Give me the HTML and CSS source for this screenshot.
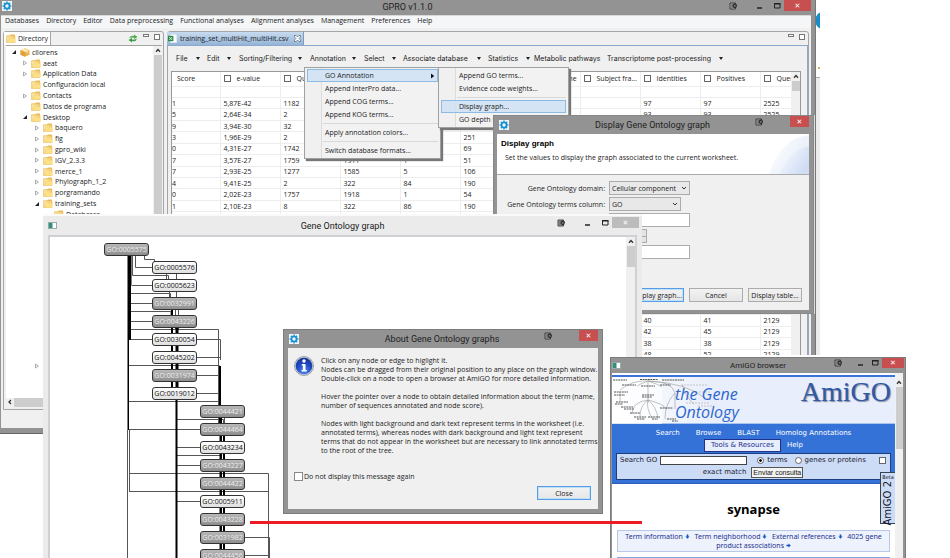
FILE: index.html
```html
<!DOCTYPE html>
<html lang="en">
<head>
<meta charset="utf-8">
<title>GPRO v1.1.0</title>
<link rel="stylesheet" href="styles.css">
</head>
<body>
<svg width="0" height="0" class="defs" aria-hidden="true">
  <defs>
    <linearGradient id="fold" x1="0" y1="0" x2="1" y2="1"><stop offset="0" stop-color="#fdeeb0"/><stop offset="1" stop-color="#f0b848"/></linearGradient>
    <radialGradient id="infog" cx=".5" cy=".8" r=".8"><stop offset="0" stop-color="#4f86ee"/><stop offset=".6" stop-color="#1c45c0"/><stop offset="1" stop-color="#1a3590"/></radialGradient>
    <symbol id="gear" viewBox="0 0 10 10"><rect width="10" height="10" fill="#f2f6f8"/><circle cx="5" cy="5" r="2.6" fill="none" stroke="#1591d0" stroke-width="1.8"/><g stroke="#1591d0" stroke-width="1.5"><path d="M5 .6v1.2M5 8.200v1.2M.6 5h1.2M8.200 5h1.200M1.900 1.900l.8.8M7.300 7.300l.8.8M1.900 8.100l.8-.8M7.300 2.700l.8-.8"/></g></symbol>
    <symbol id="folder" viewBox="0 0 10 9"><path d="M.5 1.500h3.500l1-1h4v2H.5z" fill="#eebf5c"/><path d="M.5 2h8.500v6.500H.5z" fill="url(#fold)" stroke="#e2b050" stroke-width=".5"/><path d="M3 4.500h6.500V8.500H2z" fill="#fbe08a"/></symbol>
    <symbol id="box" viewBox="0 0 11 10"><path d="M5.500.3L10.500 2.500v5L5.500 9.800.5 7.500v-5z" fill="#eab14e"/><path d="M5.500.3l5 2.200-5 2.300-5-2.300z" fill="#f8dc9a"/><path d="M5.500 4.800v5L.5 7.500v-5z" fill="#e3a03a"/><path d="M3 1.400l5 2.300v2" stroke="#fff3cf" fill="none"/></symbol>
    <symbol id="win" viewBox="0 0 9 7"><rect x=".5" y=".5" width="8" height="6" fill="#fff" stroke="#9aa"/><rect x="1" y="1" width="3.500" height="5" fill="#2f8f7b"/></symbol>
    <symbol id="pin" viewBox="0 0 8 8"><path d="M1 1h5.500v6H1z" fill="#aaa" stroke="#333" stroke-width=".9"/><path d="M2 3h3M2 5h2" stroke="#333" stroke-width=".7"/><circle cx="5.700" cy="3.800" r="2.200" fill="#222"/><path d="M4.600 3l2.200 1.600M6.500 2.600l-1.500 2.200" stroke="#ccc" stroke-width=".5"/></symbol>
    <symbol id="min" viewBox="0 0 8 8"><path d="M1 6h5" stroke="#222" stroke-width="1.500"/></symbol>
    <symbol id="max" viewBox="0 0 8 8"><path d="M1.500 1.500h5.500v4.500H1.500z" fill="none" stroke="#222"/><path d="M1 1.800h6.500" stroke="#222" stroke-width="1.400"/></symbol>
    <symbol id="up" viewBox="0 0 8 8"><path d="M2 5.200L4 3l2 2.200" fill="none" stroke="#333" stroke-width="1.300"/></symbol>
    <symbol id="tri" viewBox="0 0 6 6"><path d="M1.500 1L4.500 3 1.500 5z" fill="#fff" stroke="#999" stroke-width=".8"/></symbol>
    <symbol id="trio" viewBox="0 0 6 6"><path d="M5 1v4H1z" fill="#222"/></symbol>
    <symbol id="arr" viewBox="0 0 6 6"><path d="M2 .5h2V3h1.500L3 5.800.5 3H2z" fill="#1450c8"/></symbol>
  </defs>
</svg>

<div class="desktop">
  <div class="behind"><svg viewBox="0 0 5 355" width="5" height="355" aria-hidden="true"><path d="M0 0h5v77H0z" fill="#fff"/><path d="M0 77h5v278H0z" fill="#ececec"/><path d="M0 77.500h5" stroke="#aaa"/><circle cx="9" cy="20.500" r="9" fill="#1a8cc8"/><path d="M3 67h2v2H3z" fill="#d9b35c"/></svg></div>

  <section class="window main">
    <header class="bar">
      <svg class="ico"><use href="#gear"/></svg><h1>GPRO v1.1.0</h1>
      <div class="ctl"><svg class="pin"><use href="#pin"/></svg><svg class="mi"><use href="#min"/></svg><svg><use href="#max"/></svg><button class="x" aria-label="Close">✕</button></div>
    </header>
    <div class="client">
      <nav class="menubar"><button>Databases</button><button>Directory</button><button>Editor</button><button>Data preprocessing</button><button>Functional analyses</button><button>Alignment analyses</button><button>Management</button><button>Preferences</button><button>Help</button></nav>
      <div class="work">
        <aside class="panel dir">
          <div class="tabs"><div class="tab"><svg class="fold"><use href="#folder"/></svg>Directory</div>
            <div class="tools"><svg viewBox="0 0 10 9" width="10" height="9"><path d="M1 4.500Q2 1 6 2V.5L9.500 3 6 5V3.800Q3 3 1 4.500z" fill="#4fae4b"/><path d="M9 4.500Q8 8 4 7v1.500L.5 6 4 4v1.500Q7 6 9 4.500z" fill="#3d9a45"/></svg><i class="mn"></i><i class="mx"></i></div></div>
          <div class="dirbody">
            <ul class="tree">
              <li class="l0"><svg class="tw"><use href="#trio"/></svg><svg class="fold"><use href="#box"/></svg>cllorens</li>
              <li class="l1"><svg class="tw"><use href="#tri"/></svg><svg class="fold"><use href="#folder"/></svg>aeat</li>
              <li class="l1"><svg class="tw"><use href="#tri"/></svg><svg class="fold"><use href="#folder"/></svg>Application Data</li>
              <li class="l1"><svg class="tw"></svg><svg class="fold"><use href="#folder"/></svg>Configuración local</li>
              <li class="l1"><svg class="tw"><use href="#tri"/></svg><svg class="fold"><use href="#folder"/></svg>Contacts</li>
              <li class="l1"><svg class="tw"></svg><svg class="fold"><use href="#folder"/></svg>Datos de programa</li>
              <li class="l1"><svg class="tw"><use href="#trio"/></svg><svg class="fold"><use href="#folder"/></svg>Desktop</li>
              <li class="l2"><svg class="tw"><use href="#tri"/></svg><svg class="fold"><use href="#folder"/></svg>baquero</li>
              <li class="l2"><svg class="tw"><use href="#tri"/></svg><svg class="fold"><use href="#folder"/></svg>fig</li>
              <li class="l2"><svg class="tw"><use href="#tri"/></svg><svg class="fold"><use href="#folder"/></svg>gpro_wiki</li>
              <li class="l2"><svg class="tw"><use href="#tri"/></svg><svg class="fold"><use href="#folder"/></svg>IGV_2.3.3</li>
              <li class="l2"><svg class="tw"><use href="#tri"/></svg><svg class="fold"><use href="#folder"/></svg>merce_1</li>
              <li class="l2"><svg class="tw"><use href="#tri"/></svg><svg class="fold"><use href="#folder"/></svg>Phylograph_1_2</li>
              <li class="l2"><svg class="tw"><use href="#tri"/></svg><svg class="fold"><use href="#folder"/></svg>porgramando</li>
              <li class="l2"><svg class="tw"><use href="#trio"/></svg><svg class="fold"><use href="#folder"/></svg>training_sets</li>
              <li class="l3"><svg class="fold"><use href="#folder"/></svg>Databases</li>
              <li class="l2 last"><svg class="tw"><use href="#tri"/></svg><svg class="fold"><use href="#folder"/></svg></li>
            </ul>
            <div class="vscroll"><svg><use href="#up"/></svg><span class="thumb long"></span></div>
          </div>
          <div class="hscroll"><svg viewBox="0 0 8 8"><path d="M5 2L3 4l2 2" fill="none" stroke="#333" stroke-width="1.300"/></svg><span class="thumb"></span></div>
        </aside>
        <main class="panel sheet">
          <div class="tabs"><div class="tab on"><svg viewBox="0 0 10 10" width="9" height="9"><path d="M2 0h8v10H2z" fill="#fff" stroke="#9ab" stroke-width=".6"/><path d="M0 2h6v6H0z" fill="#2c8a43"/><path d="M1.500 3.500l3 3M4.500 3.500l-3 3" stroke="#fff"/></svg>training_set_multiHit_multiHit.csv<svg class="tx" viewBox="0 0 7 7"><path d="M.5.5h1.500l1.500 1.500L5 .5h1.500V2L5 3.500 6.500 5v1.500H5L3.500 5 2 6.500H.5V5L2 3.500.5 2z" fill="#fff" stroke="#567" stroke-width=".7"/></svg></div><div class="tools"><i class="mn"></i><i class="mx"></i></div></div>
          <div class="sheetbody">
            <div class="toolbar"><button class="t1">File<b></b></button><button class="t2">Edit<b></b></button><button class="t3">Sorting/Filtering<b></b></button><button class="t4">Annotation<b></b></button><button class="t5">Select<b></b></button><button class="t6">Associate database<b></b></button><button class="t7">Statistics<b></b></button><button class="t8">Metabolic pathways</button><button class="t9">Transcriptome post-processing<b></b></button></div>
            <div class="grid">
              <table>
                <colgroup><col class="c0"><col><col><col><col><col><col><col><col><col><col class="c10"></colgroup>
                <thead><tr><th class="sc">Score</th><th><input type="checkbox" aria-label="e-value">e-value</th><th><input type="checkbox" aria-label="Query start">Qu</th><th></th><th></th><th></th><th class="me">ne</th><th><input type="checkbox" aria-label="Subject frame">Subject fra...</th><th><input type="checkbox" aria-label="Identities">Identities</th><th><input type="checkbox" aria-label="Positives">Positives</th><th><input type="checkbox" aria-label="Query length">Quer</th></tr></thead>
                <tbody id="rows"></tbody>
              </table>
              <div class="vscroll"><svg><use href="#up"/></svg><span class="thumb short"></span></div>
            </div>
          </div>
        </main>
      </div>
    </div>
  </section>

  <div class="menu menu1" role="menu">
    <button class="hot">GO Annotation<svg viewBox="0 0 5 6" width="4" height="6"><path d="M0 0l4 3-4 3z" fill="#111"/></svg></button><button>Append InterPro data...</button><button>Append COG terms...</button><button>Append KOG terms...</button><hr><button>Apply annotation colors...</button><hr><button>Switch database formats...</button>
  </div>
  <div class="menu menu2" role="menu">
    <button>Append GO terms...</button><button>Evidence code weights...</button><hr><button class="hot">Display graph...</button><button>GO depth s</button>
  </div>

  <section class="window display">
    <header class="bar"><svg class="ico"><use href="#gear"/></svg><h2>Display Gene Ontology graph</h2><div class="ctl"><svg class="pin"><use href="#pin"/></svg><button class="x" aria-label="Close">✕</button></div></header>
    <div class="client">
      <div class="banner"><div><h3>Display graph</h3><p>Set the values to display the graph associated to the current worksheet.</p></div>
        <svg viewBox="0 0 42 40" width="42" height="40" aria-hidden="true"><defs><linearGradient id="sw" x1="0" y1="0" x2="1" y2=".6"><stop offset="0" stop-color="#fff"/><stop offset="1" stop-color="#cfdcf4"/></linearGradient></defs><path d="M2 40Q14 4 42 1v39z" fill="url(#sw)" opacity=".5"/><path d="M12 40Q22 16 42 12v28z" fill="url(#sw)"/></svg></div>
      <form class="form">
        <label for="dom">Gene Ontology domain:</label><select id="dom"><option>Cellular component</option></select>
        <label for="col">Gene Ontology terms column:</label><select id="col" class="narrow"><option>GO</option></select>
        <label for="f1"></label><input id="f1" type="text" aria-label="Sequences column">
        <label for="f2"></label><input id="f2" class="spin" type="text" aria-label="Minimum level">
        <label for="f3"></label><input id="f3" type="text" aria-label="Minimum score">
      </form>
      <div class="btns"><button class="focus">Display graph...</button><button>Cancel</button><button>Display table...</button></div>
    </div>
  </section>

  <div class="patch"></div>

  <section class="window graph">
    <header class="bar"><svg class="ico small"><use href="#win"/></svg><h2>Gene Ontology graph</h2><div class="ctl"><svg class="pin"><use href="#pin"/></svg><svg class="mi"><use href="#min"/></svg><svg><use href="#max"/></svg><button class="x" aria-label="Close">✕</button></div></header>
    <div class="client">
      <div class="canvas">
        <svg class="edges" viewBox="50 237 576 330" width="576" height="330" aria-hidden="true">
          <g fill="none" stroke="#555" stroke-width="1">
            <path d="M132.500 250V275.500H168.500V280M135.500 250V267.500H153M144.500 250V259.500H154.500V264"/>
            <path d="M131.500 285.500H153M131 293.500H170.500V300M130.500 303.500H153M130.500 311.500H171V318M130.500 321.500H153M130.500 329.500H218.500V405M129.500 339.500H153M129 365.500H219.500M129 401.500H219.500M128 429.500H201M129.500 430V491.500M129 473.500H268.500V560M129 491.500H268.500M127.500 430V560"/>
            <path d="M196 339.500H220.500V360M196 357.500H220M196 375.500H219M196 393.500H219M176.500 419.500H223.500V425M176 447.500H201M176 455.500H222M176 465.500H201M176 501.500H201M244 537.500H269.500V560M244 555.500H268"/>
            <path d="M166.500 273V279M176.500 273V300M169.500 290V297M175.500 300V330M178.500 300V330M218.500 417V425M224.500 417V425"/>
          </g>
          <g fill="#000"><path d="M127.500 250h4v35h-.5v55h-2V430h-1.500z"/><path d="M219 366h2v60h-2zM171 306h2v84h-2zM175.500 325h3v75h-3zM175.500 400h2v160h-2z"/><path d="M219.500 417h2.500v143h-2.500zM223 432h2v128h-2z"/></g>
        </svg>
        <div class="nodes">
          <button class="n dark root">GO:0005575</button>
          <button class="n b">GO:0005576</button><button class="n b">GO:0005623</button><button class="n b dark">GO:0032991</button><button class="n b dark">GO:0043226</button><button class="n b">GO:0030054</button><button class="n b">GO:0045202</button><button class="n b dark">GO:0031974</button><button class="n b">GO:0019012</button>
          <button class="n c dark">GO:0044421</button><button class="n c dark">GO:0044464</button><button class="n c">GO:0043234</button><button class="n c dark">GO:0043227</button><button class="n c dark">GO:0044422</button><button class="n c">GO:0005911</button><button class="n c dark">GO:0043228</button><button class="n c dark">GO:0031982</button><button class="n c dark">GO:0044456</button>
        </div>
      </div>
      <div class="vscroll"><svg><use href="#up"/></svg><span class="thumb mid"></span></div>
    </div>
  </section>

  <section class="window about">
    <header class="bar"><svg class="ico"><use href="#gear"/></svg><h2>About Gene Ontology graphs</h2><div class="ctl"><svg class="pin"><use href="#pin"/></svg><button class="x" aria-label="Close">✕</button></div></header>
    <div class="client">
      <div class="msg">
        <svg viewBox="0 0 20 20" width="20" height="20" aria-hidden="true"><circle cx="10" cy="10" r="9.500" fill="#c9cdd6" stroke="#8b909c" stroke-width=".8"/><circle cx="10" cy="10" r="8.300" fill="url(#infog)"/><circle cx="10" cy="5" r="1.700" fill="#fff"/><path d="M7.800 8h3.700v6h1.300v1.500H7.500V14h1.300V9.500h-1z" fill="#fff"/></svg>
        <div class="copy">
          <p>Click on any node or edge to higlight it.<br>Nodes can be dragged from their original position to any place on the graph window.<br>Double-click on a node to open a browser at AmiGO for more detailed information.</p>
          <p>Hover the pointer over a node to obtain detailed information about the term (name,<br>number of sequences annotated and node score).</p>
          <p>Nodes with light background and dark text represent terms in the worksheet (i.e.<br>annotated terms), whereas nodes with dark background and light text represent<br>terms that do not appear in the worksheet but are necessary to link annotated terms<br>to the root of the tree.</p>
        </div>
      </div>
      <label class="again"><input type="checkbox">Do not display this message again</label>
      <div class="btns"><button class="focus">Close</button></div>
    </div>
  </section>

  <section class="window amigo">
    <header class="bar"><svg class="ico small"><use href="#win"/></svg><h2>AmiGO browser</h2><div class="ctl"><svg class="pin"><use href="#pin"/></svg><svg class="mi"><use href="#min"/></svg><svg><use href="#max"/></svg><button class="x" aria-label="Close">✕</button></div></header>
    <div class="client">
      <div class="page">
        <div class="brand">
          <svg viewBox="0 0 110 46" width="110" height="46" aria-hidden="true"><rect width="50" height="46" fill="#fff" opacity=".6"/><g fill="none" stroke="#999" stroke-width=".6"><path d="M36 3Q20 2 8 12M36 3Q28 6 25 8M36 3v22M36 3q10 3 14 6M36 3q24 0 27 12v16M36 3q40 2 58 18M36 22Q20 24 20 36M36 22q-8 6-8 16M36 22q-2 8 4 18M36 22q8 6 10 18M36 22q16 4 18 9M8 14v10M63 15q-10 10-10 26M70 6q4 14 12 20"/></g><g stroke="#555" stroke-width="1.200" stroke-dasharray="2 .6"><path d="M1 2h14M28 1.500h18M50 2h22M10 7h14M29 8h14M48 7h11M2 14h14M2 17h11M30 17h12M30 19h10M4 24h12M3 26h8M9 29h12M12 31h10M18 35h10M22 39h12M25 41h8M36 39h12M40 41h6M48 30h13M55 41h9M60 43h6"/></g><g stroke="#bbb" stroke-width=".8" stroke-dasharray="2 1"><path d="M72 7h24M84 14h14M74 25h24M86 28h16"/></g></svg>
          <span class="go">the Gene<br>Ontology</span><span class="logo">AmiGO</span>
        </div>
        <nav class="nav"><div><a href="#search">Search</a><a href="#browse">Browse</a><a href="#blast">BLAST</a><a href="#homolog">Homolog Annotations</a></div><div><a class="sel" href="#tools">Tools &amp; Resources</a><a href="#help">Help</a></div>
          <form class="find"><div><label for="q">Search GO</label><input id="q" type="text"><label class="r"><input type="radio" name="k" checked>terms</label><label class="r2"><input type="radio" name="k">genes or proteins</label><input type="checkbox" id="ex"></div><div><label for="ex">exact match</label><button type="button">Enviar consulta</button></div></form>
        </nav>
        <h2 class="term">synapse</h2>
        <p class="links"><a href="#info">Term information <svg><use href="#arr"/></svg></a> <a href="#near">Term neighborhood <svg><use href="#arr"/></svg></a> <a href="#ext">External references <svg><use href="#arr"/></svg></a> <a href="#assoc">4025 gene<br>product associations <svg class="east"><use href="#arr"/></svg></a></p>
        <div class="next"></div>
        <a class="beta" href="#amigo2"><small>Beta</small><span>AmiGO 2</span></a>
      </div>
      <div class="vscroll"><svg><use href="#up"/></svg><span class="thumb tall"></span></div>
    </div>
  </section>

  <div class="link"></div>
</div>
<script src="rows.js"></script>
</body>
</html>
```
FILE: rows.js
```js
// Columns: score, e-value, query start, three middle columns, two blank, identities, positives, query length.
const data = [
  ["", "", "", "", "", "", "", "", "", "", ""],
  ["1", "5,87E-42", "1182", "", "", "", "", "", "97", "97", "2525"],
  ["5", "2,64E-34", "2", "", "", "", "", "", "93", "93", "2525"],
  ["9", "3,94E-30", "32", "", "", "", "", "", "", "", ""],
  ["3", "1,96E-29", "2", "", "", "251", "", "", "", "", ""],
  ["0", "4,31E-27", "1742", "", "", "69", "", "", "", "", ""],
  ["7", "3,57E-27", "1759", "1911", "1", "51", "", "", "", "", ""],
  ["7", "2,93E-25", "1277", "1585", "5", "106", "", "", "", "", ""],
  ["4", "9,41E-25", "2", "322", "84", "190", "", "", "", "", ""],
  ["0", "2,02E-23", "1757", "1918", "1", "54", "", "", "", "", ""],
  ["1", "2,10E-23", "8", "322", "86", "190", "", "", "", "", ""]
];
while (data.length < 20) data.push(Array(11).fill(""));
[["40", "41"], ["42", "45"], ["38", "38"], ["48", "52"]].forEach(([a, b]) =>
  data.push(["", "", "", "", "", "", "", "", a, b, "2129"]));
document.getElementById("rows").innerHTML = data.map(r =>
  "<tr>" + r.map(c => `<td>${c || "&nbsp;"}</td>`).join("") + "</tr>").join("");
```
FILE: styles.css
```css
* { box-sizing: border-box; }
body { margin: 0; background: #fff; color: #222; font: 7px/9px "Open Sans", "Noto Sans", sans-serif; }
h1, h2, h3, p, ul { margin: 0; padding: 0; }
button, input, select { font: inherit; color: inherit; margin: 0; padding: 0; }
button { border: 0; background: none; white-space: nowrap; }
svg { flex: none; display: block; }
a { color: inherit; text-decoration: none; }
input[type="checkbox"] { appearance: none; width: 7px; height: 7px; border: 1px solid #666; background: #fff; flex: none; }
.defs { position: absolute; }
.desktop { position: relative; height: 100vh; overflow: hidden; }

/* windows */
.window { position: absolute; display: flex; flex-direction: column; background: #939393; }
.bar { position: relative; display: flex; align-items: center; justify-content: center; flex: none; }
.bar h1, .bar h2 { font: 9px/12px Roboto, "Open Sans", sans-serif; color: #222; }
.bar .ico { position: absolute; left: 5px; width: 10px; height: 10px; }
.bar .ico.small { width: 9px; height: 7px; }
.ctl { position: absolute; top: 0; right: 4px; display: flex; align-items: center; }
.ctl svg { width: 8px; height: 8px; margin-right: 3px; }
.ctl .pin { margin-right: 19px; }
.ctl .mi { margin-right: 9px; }
.x { width: 27px; height: 11px; background: #c84f50; color: #fff; font: 7px/10px "DejaVu Sans", sans-serif; }
.client { flex: 1; display: flex; flex-direction: column; background: #f0f0f0; min-height: 0; }

.behind { position: absolute; left: 815px; top: 0; }
.main { left: 0; top: 0; width: 816px; height: 434px; border-bottom: 1px solid #666; border-right: 1px solid #777; }
.main > .bar { height: 15px; padding-bottom: 2px; }
.main > .bar .ico { left: 2px; top: 1px; }
.main > .client { margin: 0 4px 5px 1px; border-top: 1px solid #d8d8d8; }
.menubar { display: flex; align-items: flex-start; gap: 7px; height: 12px; padding-left: 4px; background: #f5f6f8; }
.work { flex: 1; display: flex; gap: 3px; padding: 3px 2px 18px; min-height: 0; }
.panel { border: 1px solid #a5a5a5; border-radius: 3px 3px 0 0; display: flex; flex-direction: column; min-width: 0; }
.dir { width: 161px; flex: none; }
.sheet { flex: 1; }
.tabs { display: flex; justify-content: space-between; height: 13px; flex: none; }
.tab { display: flex; align-items: center; gap: 2px; padding: 0 2px; border-right: 1px solid #a5a5a5; background: #fff; }
.tab.on { width: 137px; background: linear-gradient(#c8dbf0, #94b4d6); border-color: #7f9db9; gap: 3px; padding-left: 1px; margin-left: -1px; }
.tx { width: 7px; height: 7px; margin-left: 2px; }
.tools { display: flex; gap: 5px; padding: 2px 3px; }
.tools i { width: 6px; height: 6px; border: 1px solid #777; background: #fff; }
.tools .mn { height: 3px; margin-left: 0; }
.dirbody { flex: 1; display: flex; border: 1px solid #a5a5a5; border-width: 1px 0 0; background: #fff; margin: 0 1px 0 2px; min-height: 0; }
.tree { flex: 1; list-style: none; height: 325px; padding-top: 1px; display: grid; grid-template-rows: repeat(30, 1fr); min-width: 0; }
.tree li { display: flex; align-items: center; gap: 2px; min-height: 0; color: #222; }
.tree .l0 { padding-left: 5px; }
.tree .l1 { padding-left: 16px; }
.tree .l2 { padding-left: 28px; }
.tree .l3 { padding-left: 48px; }
.tree .last { grid-row: 30; }
.tw { width: 6px; height: 6px; margin-right: 1px; }
.fold { width: 10px; height: 9px; }
.vscroll { width: 9px; flex: none; background: #f0f0f0; display: flex; flex-direction: column; align-items: center; }
.vscroll svg { width: 8px; height: 9px; }
.thumb { background: #cdcdcd; width: 8px; }
.long { height: 240px; } .short { height: 10px; } .mid { height: 21px; } .tall { height: 62px; width: 7px; }
.hscroll { display: flex; height: 9px; background: #f0f0f0; margin: 0 2px 2px; }
.hscroll svg { width: 8px; height: 8px; }
.hscroll .thumb { width: 110px; }

.sheetbody { flex: 1; border: solid #8ba9cc; border-width: 1px 1px 0 0; padding: 0 6px 0 3px; min-height: 0; display: flex; flex-direction: column; }
.toolbar { display: flex; height: 25px; padding: 0 0 1px 5px; font: 7px/9px Inter, "Liberation Sans", sans-serif; flex: none; }
.toolbar button { display: flex; align-items: center; justify-content: space-between; flex: none; text-align: left; }
.toolbar b { border: 2px solid transparent; border-top: 3px solid #222; border-bottom: 0; }
.t1 { width: 24px; margin-right: 7px; } .t2 { width: 24px; margin-right: 8px; } .t3 { width: 63px; margin-right: 8px; }
.t4 { width: 46px; margin-right: 8px; } .t5 { width: 32px; margin-right: 7px; } .t6 { width: 78px; margin-right: 7px; }
.t7 { width: 42px; margin-right: 4px; } .t8 { width: 65px; margin-right: 8px; } .t9 { width: 116px; }
.grid { flex: 1; display: flex; align-items: flex-start; border: 1px solid #999; border-bottom: 0; background: #f0f0f0; min-height: 0; overflow: hidden; }
.grid table { flex: 1; width: 0; height: 289px; table-layout: fixed; border-collapse: collapse; background: #fff; }
.grid col { width: 60px; } .grid .c0 { width: 48px; } .grid .c10 { width: auto; }
.grid td, .grid th { border: 1px solid #ededed; border-width: 0 1px 1px 0; padding: 0 0 0 3px; font-weight: 400; text-align: left; white-space: nowrap; overflow: hidden; line-height: 9px; }
.grid td:first-child { padding-left: 0; }
.grid tr > :last-child { border-right: 0; }
.grid thead tr { height: 14px; }
.grid th input { display: inline-block; vertical-align: -1px; margin-right: 6px; }
.grid .sc { padding-left: 5px; } .grid .me { padding-left: 48px; }

/* menus */
.menu { position: absolute; display: flex; flex-direction: column; padding: 1px 2px; background: linear-gradient(90deg, #f0f0f0 16px, #dcdcdc 16px, #dcdcdc 17px, #f2f2f2 17px); border: 1px solid #a0a0a0; box-shadow: 2px 2px 1px #777; }
.menu button { height: 13px; padding-left: 17px; text-align: left; display: flex; justify-content: space-between; align-items: center; border: 1px solid transparent; padding-right: 2px; }
.menu .hot { background: #cfe2f5d9; border-color: #8ebbe4; }
.menu hr { width: auto; height: 1px; margin: 2px 0 2px 16px; border: 0; background: #d8d8d8; }
.menu1 { left: 304px; top: 67px; width: 137px; }
.menu2 { left: 438px; top: 67px; width: 131px; }

/* dialogs */
.btns { display: flex; justify-content: flex-end; gap: 5px; }
.btns button { width: 54px; height: 14px; border: 1px solid #acacac; background: linear-gradient(#f2f2f2, #e6e6e6); }
.btns .focus { border-color: #569de5; box-shadow: inset 0 0 0 1px #bfe0fb; }
.display { left: 493px; top: 115px; width: 321px; height: 199px; border: 1px solid #888; box-shadow: 1px 0 0 #ddd; }
.display .bar { height: 18px; padding-right: 2px; }
.about .bar { padding-right: 2px; }
.display .client { margin: 0 4px 3px 3px; }
.display .pin, .about .pin { margin-right: 27px; }
.display .x, .about .x { width: 19px; }
.banner { display: flex; justify-content: space-between; height: 41px; background: #fff; border-bottom: 1px solid #aaa; padding-left: 4px; }
.banner h3 { font: bold 8px/10px "Liberation Sans", sans-serif; color: #000; padding-top: 5px; }
.banner p { padding: 4px 0 0 4px; }
.form { display: grid; grid-template-columns: 108px auto; justify-content: start; align-items: center; column-gap: 4px; grid-template-rows: repeat(5, 14px); row-gap: 2px; padding-top: 6px; }
.form label { text-align: right; white-space: nowrap; }
.form select, .form input { width: 81px; height: 14px; border: 1px solid #acacac; background: #fff; }
.form select { appearance: none; padding: 0 2px; background: url("data:image/svg+xml,%3Csvg xmlns='http://www.w3.org/2000/svg' viewBox='0 0 6 6'%3E%3Cpath d='M1 2l2 2 2-2' fill='none' stroke='%23333'/%3E%3C/svg%3E") right 2px center / 6px no-repeat, #e8e8e8; }
.form .narrow { width: 72px; }
.form .spin { width: 38px; background: linear-gradient(#aaa, #aaa) right 0 center / 8px 1px no-repeat, linear-gradient(90deg, #fff 28px, #e4e4e4 28px); }
.display .btns { margin: auto 7px 8px 0; }

.patch { position: absolute; left: 642px; top: 355px; right: 0; bottom: 0; background: #fff; }
.graph { left: 43px; top: 214px; bottom: 0; width: 599px; background: #ebebeb; border-top: 2px solid #fafafa; }
.graph .bar { height: 19px; }
.graph .x { background: #bcbcbc; }
.graph .ctl { right: 3px; top: 1px; }
.graph > .client { margin: 0 5px 0 5px; border: solid #cfcfd4; border-width: 2px 2px 0; flex-direction: row; background: #fff; }
.canvas { position: relative; flex: 1; overflow: hidden; }
.edges { position: absolute; left: 0; top: 0; }
.nodes { position: relative; display: flex; flex-direction: column; gap: 5px; padding: 6px 0 0 54px; }
.n { width: 45px; height: 13px; flex: none; border: 1px solid #333; border-radius: 3px; background: linear-gradient(#fff, #e0e0e0); color: #111; }
.n.dark { background: linear-gradient(#b8b8b8, #8e8e8e); color: #eee; }
.n.b { margin-left: 48px; } .n.c { margin-left: 96px; }

.about { left: 283px; top: 329px; width: 320px; height: 185px; border: 1px solid #7c7c7c; }
.about .bar { height: 18px; }
.about .client { margin: 0 4px 4px; padding: 8px 7px 8px 6px; }
.msg { display: flex; gap: 7px; }
.copy { display: flex; flex-direction: column; gap: 9px; white-space: nowrap; }
.again { display: flex; align-items: center; gap: 1px; margin-top: 17px; }
.again input { width: 9px; height: 9px; border-color: #888; }
.about .btns { margin-top: 5px; }

/* AmiGO browser */
.amigo { left: 610px; top: 357px; bottom: 0; width: 296px; border: 1px solid #7c7c7c; border-bottom: 0; }
.amigo > .bar { height: 15px; }
.amigo > .bar h2 { font-size: 8px; }
.amigo > .bar .ico { left: 1px; }
.amigo .x { width: 22px; height: 10px; } .amigo .ctl { right: 1px; } .amigo .pin { margin-right: 15px; } .amigo .mi { margin-right: 6px; }
.amigo > .client { margin: 0 2px 0 1px; flex-direction: row; background: #fff; overflow: hidden; }
.amigo .vscroll { width: 8px; padding-top: 5px; }
.page { position: relative; flex: 1; margin-top: 2px; font: 7px/9px "DejaVu Sans", sans-serif; min-width: 0; }
.brand { position: relative; display: flex; justify-content: space-between; height: 49px; border-top: 2px solid #3b74d8; background: linear-gradient(90deg, #fff, #e8eefb 35%); border-bottom: 1px solid #a9c4ee; }
.brand svg { position: absolute; left: 0; top: 1px; }
.go { position: relative; padding: 8px 0 0 63px; font: italic 16px/18px "Open Sans", sans-serif; color: #2c66cf; }
.logo { font: 28px/30px "Liberation Serif", serif; color: #2f5aa8; padding-right: 4px; text-shadow: 1px 1px 1px #889; }
.nav { background: #3572d8; color: #fff; padding: 4px 4px 3px; border-bottom: 1px solid #2a5db8; }
.nav > div { display: flex; justify-content: center; gap: 16px; align-items: center; height: 11px; }
.nav > div + div { gap: 6px; height: 13px; }
.nav .sel { background: #e8eefb; color: #22318f; border: 1px solid #22318f; padding: 1px 6px; }
.find { margin-top: 1px; background: #cddcf6; border: 1px solid #1c3d80; color: #223; height: 27px; }
.find div { display: flex; align-items: center; height: 13px; padding: 0 4px 0 3px; }
.find div + div { justify-content: center; gap: 5px; height: 11px; }
.find input[type="text"] { width: 87px; height: 9px; border: 1px solid #444; background: #fff; margin: 0 10px 0 3px; }
.find label { display: flex; align-items: center; }
.find .r2 { margin-left: 7px; }
.find #ex { margin-left: auto; }
.find input[type="radio"] { appearance: none; width: 7px; height: 7px; border: 1px solid #666; border-radius: 50%; background: #fff; margin-right: 3px; }
.find input[type="radio"]:checked { background: radial-gradient(#111 30%, #fff 45%); }
.find button { border: 1px solid #555; background: #f4f4f4; padding: 0 1px; font: 7px/9px "Liberation Sans", sans-serif; color: #111; }
.term { text-align: center; font: bold 13px/18px "Open Sans", sans-serif; color: #000; margin: 16px 0 12px; }
.links { margin: 0 5px; border: 1px solid #b8c8e8; background: #eef2fc; color: #22318f; text-align: center; font: 7px/9px "Noto Sans", sans-serif; padding: 1px 0; }
.links svg { display: inline-block; width: 5px; height: 5px; }
.links .east { transform: rotate(-90deg); }
.links a + a { margin-left: 3px; }
.next { margin: 5px 5px 0; height: 10px; border: 1px solid #7fa6e0; background: #cddcf6; }
.beta { position: absolute; right: 0; top: 97px; width: 15px; height: 52px; background: #cddcf6; border: 1px solid #345; border-right: 0; color: #112; display: flex; flex-direction: column; align-items: center; }
.beta small { font-size: 5px; line-height: 8px; }
.beta span { writing-mode: vertical-rl; transform: rotate(180deg); font-size: 10px; line-height: 12px; white-space: nowrap; }

.link { position: absolute; left: 250px; top: 521px; width: 392px; height: 3px; background: #ed1c24; }
```
